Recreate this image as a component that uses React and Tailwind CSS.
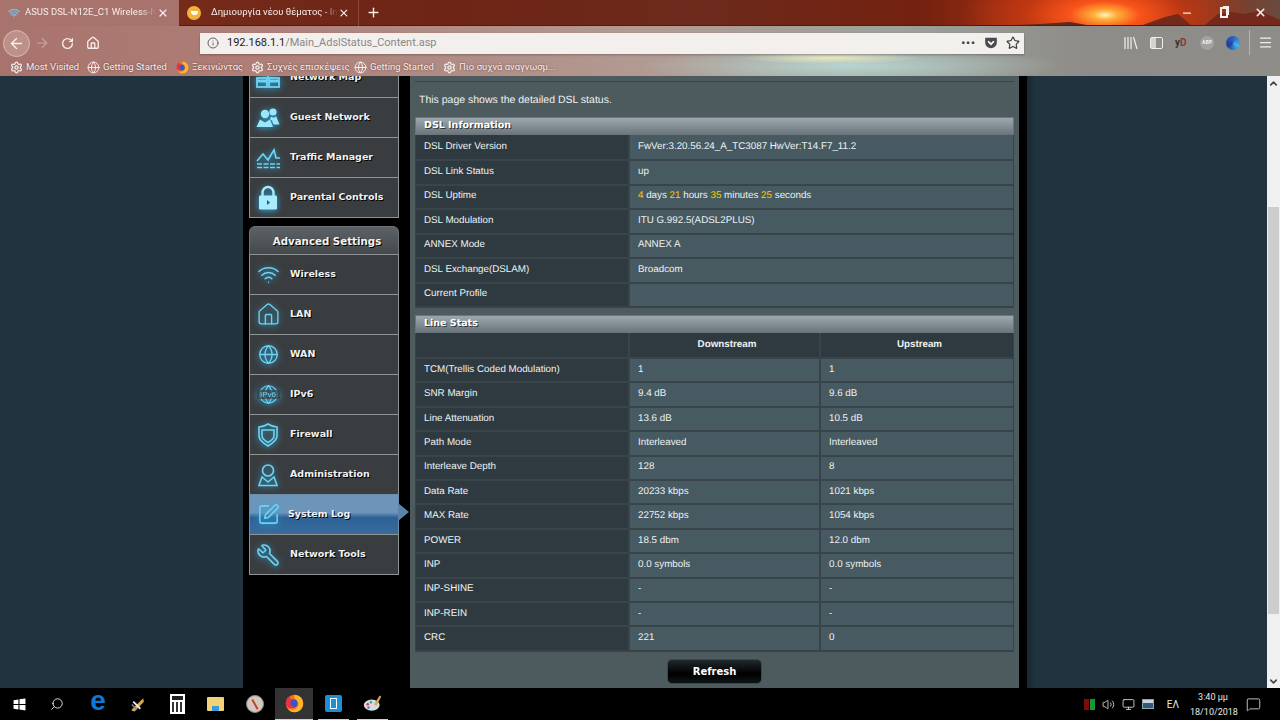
import React from 'react';
import {
  ArrowLeft, ArrowRight, RotateCw, Home, Info, Star, X, Plus, Minus, Menu, Settings, Globe, Search, ChevronUp, ChevronDown,
  Wifi, SquarePen, Wrench, Volume2, MessageSquare, Monitor,
} from 'lucide-react';

const dslInfo = [
  ['DSL Driver Version', 'FwVer:3.20.56.24_A_TC3087 HwVer:T14.F7_11.2'],
  ['DSL Link Status', 'up'],
  ['DSL Uptime', 'uptime'],
  ['DSL Modulation', 'ITU G.992.5(ADSL2PLUS)'],
  ['ANNEX Mode', 'ANNEX A'],
  ['DSL Exchange(DSLAM)', 'Broadcom'],
  ['Current Profile', ''],
];

const lineStats = [
  ['TCM(Trellis Coded Modulation)', '1', '1'],
  ['SNR Margin', '9.4 dB', '9.6 dB'],
  ['Line Attenuation', '13.6 dB', '10.5 dB'],
  ['Path Mode', 'Interleaved', 'Interleaved'],
  ['Interleave Depth', '128', '8'],
  ['Data Rate', '20233 kbps', '1021 kbps'],
  ['MAX Rate', '22752 kbps', '1054 kbps'],
  ['POWER', '18.5 dbm', '12.0 dbm'],
  ['INP', '0.0 symbols', '0.0 symbols'],
  ['INP-SHINE', '-', '-'],
  ['INP-REIN', '-', '-'],
  ['CRC', '221', '0'],
];

const MapIcon = () => (
  <svg width="24" height="24" viewBox="0 0 24 24" fill="none" stroke="currentColor" strokeWidth="1.8">
    <rect x="7" y="2" width="10" height="7" />
    <path d="M12 9v3" />
    <rect x="1" y="12" width="10" height="9" />
    <rect x="13" y="12" width="10" height="9" />
    <path d="M1 15h10M13 15h10" strokeWidth="3" />
  </svg>
);

const GuestIcon = () => (
  <svg width="24" height="24" viewBox="0 0 24 24" fill="currentColor" className="text-[#9be6fb]">
    <circle cx="9" cy="8" r="4.2" />
    <path d="M0.5 21l3.5-7.5 5 3 5-3 3 7.5z" />
    <circle cx="17" cy="6" r="3.6" />
    <path d="M15 10.8l3 1 2-1.8 3.5 8.5h-6l-1.5-4-2-1z" />
  </svg>
);

const TrafficIcon = () => (
  <svg width="25" height="24" viewBox="0 0 25 24" fill="none" stroke="currentColor" strokeWidth="1.7">
    <path d="M1 15l6-7 5 6 6-10 2 8h4" />
    <path d="M1 18h23" strokeDasharray="5 1.5" />
    <path d="M1 21.5h23" strokeDasharray="5 1.5" />
  </svg>
);

const LockIcon = () => (
  <svg width="24" height="26" viewBox="0 0 24 26" className="text-[#a8ebfc]">
    <path d="M6.5 11V7.5a5.5 5.5 0 0 1 11 0V11" fill="none" stroke="currentColor" strokeWidth="2.4" />
    <rect x="3" y="10.5" width="18" height="14" rx="1.2" fill="currentColor" />
    <path d="M11 15v5l3-2.5z" fill="#1f5d78" />
  </svg>
);

const WifiIcon = () => <Wifi size={23} strokeWidth={1.6} />;
const HomeIcon = () => <Home size={25} strokeWidth={1.3} />;
const GlobeIcon = () => <Globe size={21} strokeWidth={1.5} />;

const IPv6Icon = () => (
  <span className="relative flex">
    <Globe size={21} strokeWidth={1.4} />
    <span className="absolute -inset-x-[1px] inset-y-0 my-auto h-[9px] leading-[9px] text-center text-[8px] font-['Liberation_Sans',sans-serif] bg-[#3a3d3f]/70">IPv6</span>
  </span>
);

const FirewallIcon = () => (
  <svg width="22" height="24" viewBox="0 0 22 24" fill="none" stroke="currentColor" strokeWidth="1.6">
    <path d="M2 4c3 0 6-1 9-3 3 2 6 3 9 3v9c0 4-4 7-9 10-5-3-9-6-9-10z" />
    <path d="M5 7h12v6c0 2.5-2.5 4.5-6 6.500-3.500-2-6-4-6-6.500z" />
  </svg>
);

const AdminIcon = () => (
  <svg width="22" height="24" viewBox="0 0 22 24" fill="none" stroke="currentColor" strokeWidth="1.6">
    <circle cx="11" cy="7.500" r="5.500" />
    <path d="M2 22.500l3-8.500 6 5 6-5 3 8.500z" />
  </svg>
);

const LogIcon = () => <SquarePen size={23} strokeWidth={1.6} />;
const ToolsIcon = () => <Wrench size={24} strokeWidth={1.6} className="-scale-x-100" />;

const generalMenu = [
  ['Network Map', MapIcon],
  ['Guest Network', GuestIcon],
  ['Traffic Manager', TrafficIcon],
  ['Parental Controls', LockIcon],
];

const advancedMenu = [
  ['Wireless', WifiIcon],
  ['LAN', HomeIcon],
  ['WAN', GlobeIcon],
  ['IPv6', IPv6Icon],
  ['Firewall', FirewallIcon],
  ['Administration', AdminIcon],
  ['System Log', LogIcon],
  ['Network Tools', ToolsIcon],
];

const MenuRow = ({ label, Icon, active }) => (
  <div className={`relative h-[41px] flex items-center border -mb-px ${active ? 'bg-[linear-gradient(#6d95ba_0%,#6d95ba_45%,#2c6296_58%,#3a6c9c_100%)] border-[#6d8ea8]' : 'bg-[#3a3d3f] border-[#8e9496]'}`}>
    <span className="w-9 shrink-0 flex justify-center text-[#6fd3f2] drop-shadow-[0_1px_3px_#2aa7dc]">
      <Icon />
    </span>
    <span className={`font-['DejaVu_Sans',sans-serif] font-bold text-[9.5px] text-[#f2f2f2] [text-shadow:1px_1px_0_#000] ${active ? 'ml-[2px]' : 'ml-1'}`}>{label}</span>
    {active && <span className="absolute -right-[11px] top-[8px] w-0 h-0 border-y-[9px] border-y-transparent border-l-[11px] border-l-[#5b84ab]" />}
  </div>
);

const Cell = ({ children, head, center, last }) => (
  <div className={`flex items-center h-full px-2 ${head ? 'bg-[#2f3a40]' : 'bg-[#475a61]'} ${center ? 'justify-center font-bold pl-[13px]' : ''} ${last ? '' : 'border-r-2 border-[#38444a]'}`}>
    {children}
  </div>
);

const SectionBar = ({ title }) => (
  <div className="h-[18px] flex items-center pl-[8px] border border-[#6b7579] bg-[linear-gradient(#9ca8ad,#6b777c)] font-['DejaVu_Sans',sans-serif] font-bold text-[9.5px] text-white [text-shadow:1px_1px_0_#333]">
    {title}
  </div>
);

const Uptime = () => (
  <span>
    <span className="text-[#fc0]">4</span> days <span className="text-[#fc0]">21</span> hours <span className="text-[#fc0]">35</span> minutes <span className="text-[#fc0]">25</span> seconds
  </span>
);

const Bookmark = ({ icon, label, width }) => (
  <div className="flex items-center gap-[3px] whitespace-nowrap" style={{ width }}>
    {icon}
    <span>{label}</span>
  </div>
);

const gear = <Settings size={13} strokeWidth={2.4} className="shrink-0 text-[#f5eeea]" />;
const globe = <Globe size={13} strokeWidth={1.8} className="shrink-0 text-[#f5eeea]" />;

const FirefoxIcon = ({ size = 13 }) => (
  <svg width={size} height={size} viewBox="0 0 24 24" className="shrink-0">
    <circle cx="12" cy="12" r="11" fill="#f2711c" />
    <path d="M12 1a11 11 0 0 1 11 11c0 6-5 11-11 11-3 0-6-1-8-4 4 2 12 1 13-6 0-3-2-6-5-7l0-5z" fill="#ffb52e" />
    <circle cx="10.5" cy="12" r="5.5" fill="#3a55c4" />
    <path d="M1 12c0-4 2-8 6-10-1 2-1 3 0 4l3 1c-2 1-3 3-3 5s2 4 5 4c-3 3-11 2-11-4z" fill="#e8304f" />
  </svg>
);

const Chrome = () => (
  <div className="relative h-[76px] shrink-0 overflow-hidden text-[#f6eeea] font-['Roboto',sans-serif] bg-[linear-gradient(90deg,#7a2e1e_0%,#6e2515_35%,#6d2a1c_55%,#74210f_72%,#b23512_84%,#8a2f18_92%,#6a4a3e_100%)]">
    {/* sun and ridge in the theme picture */}
    <div className="absolute left-[960px] -top-[40px] w-[290px] h-[110px] rounded-full bg-[radial-gradient(closest-side,#fff6c0_0%,#ffb03a_8%,#f9541a_24%,#d23c12aa_55%,transparent_100%)]" />
    <svg className="absolute left-[960px] top-0" width="320" height="26" viewBox="0 0 320 26">
      <path d="M30 26 L80 24 L110 22 L132 26 Z" fill="#5b2a20" />
      <path d="M180 26 L205 17 L218 14 L232 26 Z M244 26 L258 14 L272 12 L284 14 L300 11 L320 20 L320 26 Z" fill="#74291c" />
    </svg>

    {/* tab strip */}
    <div className="relative h-[26px] flex items-center text-[9.5px] border-b border-[#4a1d12]">
      <div className="h-[27px] w-[179px] flex items-center bg-[#a9736d] pl-[8px] pr-[10px] z-10">
        <Wifi size={12} strokeWidth={3} className="text-[#7fb6d8] shrink-0" />
        <span className="ml-[5px] w-[131px] overflow-hidden whitespace-nowrap [mask-image:linear-gradient(90deg,#000_88%,transparent)]">ASUS DSL-N12E_C1 Wireless-N</span>
        <X size={12} strokeWidth={2.5} className="ml-auto" />
      </div>
      <div className="h-[26px] w-[180px] flex items-center pl-[8px] pr-[8px] border-r border-[#8b4a38]">
        <span className="w-[14px] h-[14px] rounded-full bg-[#f6b13a] shrink-0 flex items-center justify-center"><span className="w-[7px] h-[4px] rounded-b-full bg-[#fff]" /></span>
        <span className="ml-[10px] w-[131px] overflow-hidden whitespace-nowrap [mask-image:linear-gradient(90deg,#000_88%,transparent)]">Δημιουργία νέου θέματος - Ins</span>
        <X size={12} strokeWidth={2.5} className="ml-auto" />
      </div>
      <Plus size={15} strokeWidth={2.2} className="ml-[7px]" />
      <div className="ml-auto flex items-center">
        <Minus size={12} strokeWidth={2.5} className="mr-[27px]" />
        <span className="relative w-[8px] h-[11px] border-2 border-[#f6eeea] mr-[26px] shadow-[2px_-2px_0_-1px_#f6eeea]" />
        <X size={13} strokeWidth={3} className="mr-[13px]" />
      </div>
    </div>

    {/* toolbar and bookmarks share the translucent layer */}
    <div className="absolute left-0 right-0 top-[26px] h-[50px] bg-[linear-gradient(90deg,#a9736d_0%,#ae7e77_20%,#b29a92_50%,#9da19b_70%,#8e8c88_85%,#8f8d88_100%)]">
      <div className="absolute left-[640px] top-[20px] w-[420px] h-[40px] rounded-full bg-[radial-gradient(closest-side,#b8d4cf,transparent)]" />
      <div className="absolute left-[740px] top-[26px] w-[180px] h-[12px] rounded-full bg-[radial-gradient(closest-side,#e9e8c0,transparent)]" />
      <div className="relative h-[34px] flex items-center">
        <div className="ml-[3px] w-[27px] h-[27px] rounded-full bg-[#bd9088] border border-[#d8bcb4] flex items-center justify-center"><ArrowLeft size={17} strokeWidth={2} /></div>
        <ArrowRight size={16} strokeWidth={1.8} className="ml-[4px] text-[#c9a59e]" />
        <RotateCw size={13} strokeWidth={2.5} className="ml-[11px]" />
        <Home size={14} strokeWidth={2.3} className="ml-[12px]" />
        <div className="ml-[100px] h-[21px] w-[824px] flex items-center bg-[#f3efed] shadow-[0_1px_2px_#0004] text-[#3d3a3a]">
          <Info size={12} strokeWidth={1.8} className="ml-[7px] text-[#555]" />
          <span className="ml-[8px] text-[11px] text-[#222]">192.168.1.1<span className="text-[#888]">/Main_AdslStatus_Content.asp</span></span>
          <span className="ml-auto text-[11px] font-bold tracking-[1px] leading-none">•••</span>
          <svg width="14" height="14" viewBox="0 0 24 24" className="ml-[8px]"><path d="M2 3h20v8a10 10 0 0 1-20 0z" fill="#4a4a4f" /><path d="M7 9l5 5 5-5" fill="none" stroke="#fff" strokeWidth="3" /></svg>
          <Star size={14} strokeWidth={2} className="ml-[8px] mr-[4px]" />
        </div>
        <div className="absolute left-[1124px] top-[4px] flex items-center text-[#f3eeea]">
          <svg width="14" height="14" viewBox="0 0 14 14" fill="none" stroke="currentColor" strokeWidth="1.2"><path d="M1 1v12M4 1v12M7 1v12M9.5 1l3.5 12" /></svg>
          <span className="ml-[12px] w-[13px] h-[12px] border border-[#f3eeea] rounded-[2px] flex"><span className="w-[5px] bg-[#f3eeea]/70" /></span>
          <span className="ml-[12px] w-[14px] text-[10px] font-bold leading-none"><span className="text-[#333]">y</span><span className="text-[#8a3a32]">D</span></span>
          <span className="ml-[11px] w-[14px] h-[14px] rounded-full bg-[#a2a2a2] text-[5px] font-bold flex items-center justify-center">ABP</span>
          <span className="ml-[12px] w-[14px] h-[14px] rounded-full bg-[conic-gradient(#2a5fc0,#46b4e8,#1f3d9e,#2a5fc0)]" />
          <span className="ml-[9px] w-px h-[25px] bg-[#b9b3ad]" />
          <Menu size={15} strokeWidth={2} className="ml-[8px]" />
        </div>
      </div>
      <div className="relative h-[14px] flex items-center pl-[10px] text-[9.5px] [text-shadow:0_0_2px_#5a3a34]">
        <Bookmark icon={gear} label="Most Visited" width={77} />
        <Bookmark icon={globe} label="Getting Started" width={89} />
        <Bookmark icon={<FirefoxIcon />} label="Ξεκινώντας" width={75} />
        <Bookmark icon={gear} label="Συχνές επισκέψεις" width={103} />
        <Bookmark icon={globe} label="Getting Started" width={89} />
        <Bookmark icon={gear} label="Πιο συχνά αναγνωσμ..." width={126} />
      </div>
    </div>
  </div>
);

const Sidebar = () => (
  <div className="w-[167px] shrink-0 pl-[6px] pr-[11px] -mt-[19px]">
    {generalMenu.map(([label, Icon]) => <MenuRow key={label} label={label} Icon={Icon} />)}
    <div className="mt-[9px] h-[29px] -mb-px flex items-center justify-center pl-[6px] pt-[3px] rounded-t-[6px] border border-[#6f7577] bg-[linear-gradient(#5b6265,#45494c)] font-['DejaVu_Sans',sans-serif] font-bold text-[10.25px] text-[#f2f2f2] [text-shadow:1px_1px_0_#000]">
      Advanced Settings
    </div>
    {advancedMenu.map(([label, Icon]) => <MenuRow key={label} label={label} Icon={Icon} active={label === 'System Log'} />)}
  </div>
);

const Main = () => (
  <div className="w-[609px] shrink-0 bg-[#4d5a5e] px-[5px] text-[9.8px] text-[#eef2f3] font-['Liberation_Sans',sans-serif] [text-rendering:geometricPrecision]">
    <div className="h-[6px] border-b border-[#39454a]" />
    <p className="h-[35px] pt-[11px] pl-[4px] text-[10.5px]">This page shows the detailed DSL status.</p>
    <SectionBar title="DSL Information" />
    <div className="border-x border-[#38444a] bg-[#38444a] flex flex-col gap-[2px] pb-[2px]">
      {dslInfo.map(([name, value], i) => (
        <div key={name} className={`grid grid-cols-[214px_1fr] ${i === 0 ? 'h-[24px]' : 'h-[22.5px]'}`}>
          <Cell head>{name}</Cell>
          <Cell last>{value === 'uptime' ? <Uptime /> : value}</Cell>
        </div>
      ))}
    </div>
    <div className="h-[7px]" />
    <SectionBar title="Line Stats" />
    <div className="border-x border-[#38444a] bg-[#38444a] flex flex-col gap-[2px] pb-[2px]">
      <div className="grid grid-cols-[214px_191px_1fr] h-[24px]">
        <Cell head />
        <Cell head center>Downstream</Cell>
        <Cell head center last>Upstream</Cell>
      </div>
      {lineStats.map(([name, down, up]) => (
        <div key={name} className="grid grid-cols-[214px_191px_1fr] h-[22.4px]">
          <Cell head>{name}</Cell>
          <Cell>{down}</Cell>
          <Cell last>{up}</Cell>
        </div>
      ))}
    </div>
    <div className="flex justify-center mt-[7px]">
      <button className="w-[95px] h-[25px] rounded-[5px] border border-[#3d484c] bg-[linear-gradient(#20292c,#000_60%,#0d1416)] text-white font-['DejaVu_Sans',sans-serif] font-bold text-[10px]">Refresh</button>
    </div>
  </div>
);

const Taskbar = () => (
  <div className="h-[32px] shrink-0 bg-black flex items-center text-[#e8e8e8] font-['Roboto',sans-serif]">
    <svg width="13" height="13" viewBox="0 0 24 24" className="ml-[13px]" fill="#fff"><path d="M1 4l9-1.3V11H1zM12 2.4L23 1v10H12zM1 13h9v8.3L1 20zM12 13h11v10l-11-1.6z" /></svg>
    <Search size={14} strokeWidth={1.6} className="ml-[24px] -scale-x-100" />
    <span className="ml-[25px] w-[18px] text-center text-[28px] leading-none font-bold text-[#0f78d4] font-['Liberation_Sans',sans-serif] -mt-[7px]">e</span>
    <svg width="17" height="17" viewBox="0 0 24 24" className="ml-[22px]"><path d="M3 20L20 3l1 5-13 14z" fill="#d9a950" /><path d="M6 8l10 10" stroke="#eee" strokeWidth="2.5" /><path d="M4 12l7 7" stroke="#888" strokeWidth="2" /></svg>
    <div className="ml-[24px] w-[15px] h-[20px] bg-white p-[2px] flex flex-col gap-[2px]">
      <span className="h-[4px] bg-[#222]" />
      <span className="flex-1 bg-[repeating-linear-gradient(90deg,#333_0_2px,#fff_2px_4px)]" />
    </div>
    <div className="ml-[22px] relative w-[17px] h-[14px] bg-[#f3d178] rounded-[1px]"><span className="absolute left-[5px] bottom-0 w-[7px] h-[5px] bg-[#3a9bd8]" /></div>
    <div className="ml-[22px] w-[18px] h-[18px] rounded-full bg-[#cfc9c0] border border-[#8a8a8a] flex items-center justify-center"><span className="w-[1.5px] h-[11px] bg-[#c8402a] -rotate-[30deg]" /></div>
    <div className="relative ml-[11px] w-[38px] h-[32px] bg-[#333] flex items-center justify-center border-b border-[#f2c9a8]"><FirefoxIcon size={19} /></div>
    <div className="relative ml-[5px] w-[31px] h-[32px] flex items-center justify-center border-b border-[#f2c9a8]">
      <span className="w-[17px] h-[17px] bg-[#1c8fd8] rounded-[2px] flex items-center justify-center"><span className="w-[7px] h-[11px] border border-white" /></span>
    </div>
    <div className="relative ml-[8px] w-[31px] h-[32px] flex items-center justify-center border-b border-[#f2c9a8]">
      <svg width="19" height="19" viewBox="0 0 24 24"><ellipse cx="11" cy="14" rx="10" ry="7" fill="#d8dce0" /><circle cx="6" cy="13" r="1.6" fill="#d33" /><circle cx="10" cy="10.5" r="1.6" fill="#3a7" /><circle cx="7" cy="17" r="1.6" fill="#38c" /><path d="M14 13l7-11 2 1-6 12z" fill="#d9a950" /></svg>
    </div>

    <div className="ml-auto flex items-center">
      <span className="w-[5px] h-[11px] bg-[#7a0c0c]" />
      <span className="w-[5px] h-[11px] ml-px bg-[#169a2c]" />
      <Volume2 size={13} strokeWidth={1.5} className="ml-[7px]" />
      <Monitor size={13} strokeWidth={1.5} className="ml-[7px]" />
      <span className="ml-[7px] w-[12px] h-[10px] bg-[#c8d4e0] border border-[#8aa] flex items-end"><span className="w-full h-[5px] bg-[#35577f]" /></span>
      <span className="ml-[13px] text-[10px]">ΕΛ</span>
      <div className="ml-[11px] w-[46px] mt-px text-[9px] leading-[15px] text-center whitespace-nowrap">
        <div>3:40 μμ</div>
        <div>18/10/2018</div>
      </div>
      <MessageSquare size={15} strokeWidth={1.3} className="ml-[10px] mr-[19px]" />
    </div>
  </div>
);

export default function App() {
  return (
    <div className="w-[1280px] h-[720px] flex flex-col overflow-hidden bg-[#21323c]">
      <Chrome />
      <div className="flex-1 flex min-h-0 overflow-hidden">
        <div className="w-[243px] shrink-0 bg-[#21333e]" />
        <div className="w-[784px] shrink-0 flex bg-black">
          <Sidebar />
          <Main />
        </div>
        <div className="flex-1 bg-[linear-gradient(90deg,#182630,#21333e_8px)]" />
        <div className="w-[13px] shrink-0 bg-[#f0f0f2] flex flex-col items-center text-[#444]">
          <ChevronUp size={11} strokeWidth={3.5} className="mt-[2px]" />
          <div className="mt-[118px] h-[407px] w-[11px] bg-[#cdcdcd]" />
          <ChevronDown size={11} strokeWidth={3.5} className="mt-auto mb-[1px]" />
        </div>
      </div>
      <Taskbar />
    </div>
  );
}
